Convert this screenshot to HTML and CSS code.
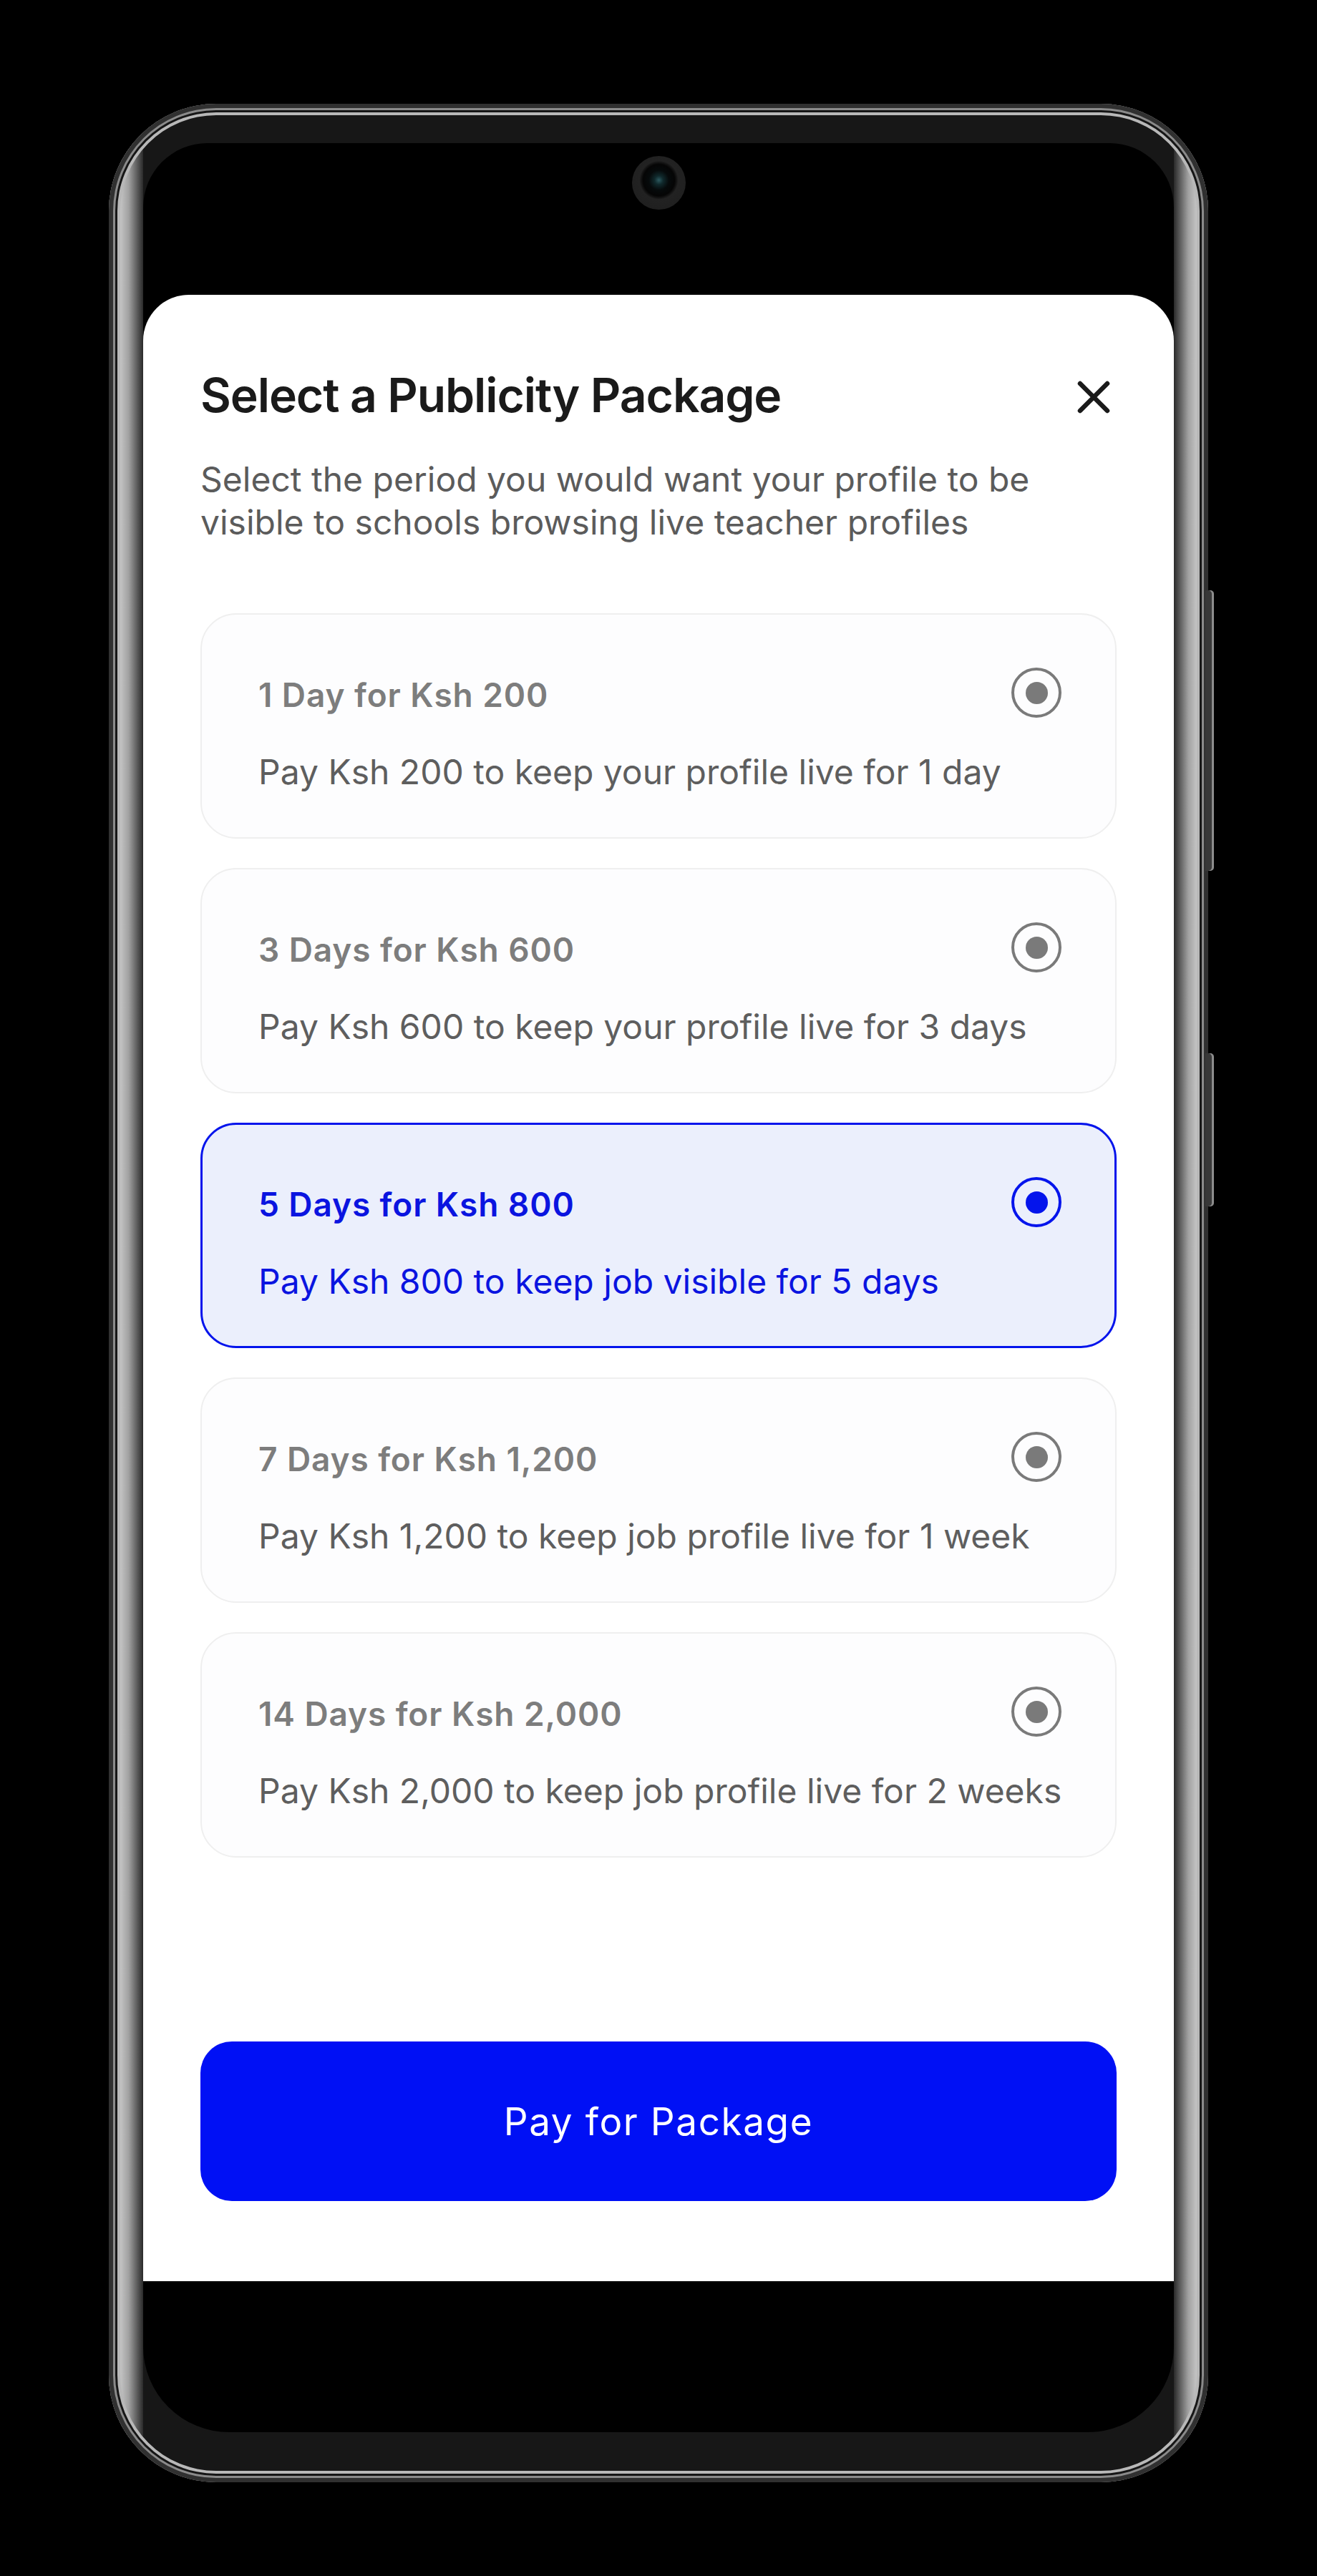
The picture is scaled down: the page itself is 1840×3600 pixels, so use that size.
FILE: index.html
```html
<!DOCTYPE html>
<html lang="en">
<head>
<meta charset="utf-8">
<title>Select a Publicity Package</title>
<link rel="stylesheet" href="styles.css">
</head>
<body>
<div class="phone">
  <span class="side-btn side-btn-upper"></span>
  <span class="side-btn side-btn-lower"></span>
  <div class="screen">
    <div class="status-area"><span class="camera"></span></div>
    <section class="sheet">
      <header class="sheet-head">
        <h1 class="sheet-title">Select a Publicity Package</h1>
        <button class="close-btn" aria-label="Close">
          <svg viewBox="0 0 48 48" width="48" height="48"><path d="M5 5 L43 43 M43 5 L5 43" stroke="#1a1a1a" stroke-width="6.5" stroke-linecap="round" fill="none"/></svg>
        </button>
      </header>
      <p class="sheet-sub">Select the period you would want your profile to be visible to schools browsing live teacher profiles</p>
      <ul class="packages">
        <li class="pkg">
          <div class="pkg-head"><span class="pkg-title">1 Day for Ksh 200</span><span class="radio"></span></div>
          <p class="pkg-desc">Pay Ksh 200 to keep your profile live for 1 day</p>
        </li>
        <li class="pkg">
          <div class="pkg-head"><span class="pkg-title">3 Days for Ksh 600</span><span class="radio"></span></div>
          <p class="pkg-desc">Pay Ksh 600 to keep your profile live for 3 days</p>
        </li>
        <li class="pkg pkg-selected">
          <div class="pkg-head"><span class="pkg-title">5 Days for Ksh 800</span><span class="radio"></span></div>
          <p class="pkg-desc">Pay Ksh 800 to keep job visible for 5 days</p>
        </li>
        <li class="pkg">
          <div class="pkg-head"><span class="pkg-title">7 Days for Ksh 1,200</span><span class="radio"></span></div>
          <p class="pkg-desc">Pay Ksh 1,200 to keep job profile live for 1 week</p>
        </li>
        <li class="pkg">
          <div class="pkg-head"><span class="pkg-title">14 Days for Ksh 2,000</span><span class="radio"></span></div>
          <p class="pkg-desc">Pay Ksh 2,000 to keep job profile live for 2 weeks</p>
        </li>
      </ul>
      <div class="spacer"></div>
      <button class="pay-btn">Pay for Package</button>
    </section>
  </div>
</div>
</body>
</html>
```

FILE: styles.css
```css
* {
  box-sizing: border-box;
  margin: 0;
  padding: 0;
}

html, body {
  background: #000;
}

body {
  width: 1840px;
  height: 3600px;
  overflow: hidden;
  font-family: Inter, "Noto Sans", sans-serif;
}

.phone {
  position: relative;
  width: 1536px;
  height: 3324px;
  margin: 145px 0 0 152px;
  padding: 55px 48px 70px;
  border-radius: 150px;
  background: linear-gradient(90deg,
    #3a3a3a 0, #3a3a3a 13px, #c4c4c4 16px, #a0a0a0 28px, #2a2a2a 48px,
    #171717 48px, #171717 calc(100% - 48px),
    #2a2a2a calc(100% - 48px), #a0a0a0 calc(100% - 28px), #c4c4c4 calc(100% - 16px), #3a3a3a calc(100% - 13px), #3a3a3a 100%);
  box-shadow:
    inset 0 0 0 6px #303030,
    inset 0 0 0 9px #8a8a8a,
    inset 0 0 0 12px #161616,
    inset 0 0 0 16px #b8b8b8;
}

.side-btn {
  position: absolute;
  right: -8px;
  width: 12px;
  background: #383838;
  border-radius: 0 5px 5px 0;
  box-shadow: inset -3px 0 0 #8c8c8c;
}

.side-btn-upper {
  top: 680px;
  height: 392px;
}

.side-btn-lower {
  top: 1327px;
  height: 214px;
}

.screen {
  height: 100%;
  background: #000;
  border-radius: 90px 90px 120px 120px;
  overflow: hidden;
  display: flex;
  flex-direction: column;
}

.status-area {
  height: 212px;
  flex: none;
  display: flex;
  justify-content: center;
  padding-top: 18px;
}

.camera {
  width: 75px;
  height: 75px;
  border-radius: 50%;
  background: radial-gradient(circle at 50% 45%, #2d5a60 0, #10292c 6px, #060a0b 14px, #050505 22px, #151515 25px, #222 27px, #1d1d1d 100%);
}

.sheet {
  height: 2776px;
  flex: none;
  background: #fff;
  border-radius: 64px 64px 0 0;
  padding: 100px 80px 112px;
  display: flex;
  flex-direction: column;
}

.sheet-head {
  display: flex;
  align-items: center;
  justify-content: space-between;
  height: 80px;
}

.sheet-title {
  font-size: 66px;
  line-height: 80px;
  font-weight: 600;
  letter-spacing: -1.1px;
  color: #1a1a1a;
}

.close-btn {
  border: none;
  background: none;
  width: 48px;
  height: 48px;
  margin: 6px 8px 0 0;
  display: block;
}

.close-btn svg {
  display: block;
}

.sheet-sub {
  margin-top: 48px;
  font-size: 48px;
  line-height: 60px;
  color: #5b5b5b;
}

.packages {
  list-style: none;
  margin-top: 97px;
  display: flex;
  flex-direction: column;
  gap: 41px;
}

.pkg {
  border: 2px solid #efefef;
  border-radius: 50px;
  background: #fdfdfe;
  padding: 84px 75px 61px 79px;
}

.pkg-head {
  display: flex;
  align-items: center;
  justify-content: space-between;
  height: 56px;
}

.pkg-title {
  font-size: 46px;
  line-height: 56px;
  font-weight: 600;
  letter-spacing: 0.9px;
  color: #7d7d7d;
}

.radio {
  flex: none;
  width: 70px;
  height: 70px;
  margin: -10px 0 -4px;
  border: 4px solid #7a7a7a;
  border-radius: 50%;
  display: grid;
  place-items: center;
}

.radio::after {
  content: "";
  width: 31px;
  height: 31px;
  border-radius: 50%;
  background: #7a7a7a;
}

.pkg-desc {
  margin-top: 50px;
  font-size: 48px;
  line-height: 60px;
  color: #5e5e5e;
  white-space: nowrap;
}

.pkg-selected {
  border: 3px solid #0414ec;
  background: #ebeffc;
  padding: 83px 74px 60px 78px;
}

.pkg-selected .pkg-title,
.pkg-selected .pkg-desc {
  color: #0a14e0;
}

.pkg-selected .radio {
  border-color: #0414ec;
}

.pkg-selected .radio::after {
  background: #0414ec;
}

.spacer {
  flex: 1;
}

.pay-btn {
  flex: none;
  height: 223px;
  border: none;
  border-radius: 44px;
  background: #0010f5;
  color: #fff;
  font-family: Inter, "Noto Sans", sans-serif;
  font-size: 53px;
  font-weight: 400;
  letter-spacing: 1.6px;
}
```
